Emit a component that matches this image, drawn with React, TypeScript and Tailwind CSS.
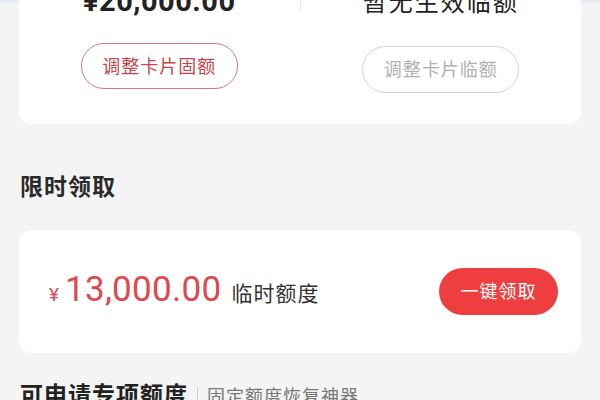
export default function App() {
  return (
    <div
      className="w-[600px] h-[400px] overflow-hidden flex flex-col bg-[linear-gradient(to_bottom,#dfe6ef_0px,#f4f4f4_4px)]"
      style={{ fontFamily: "Roboto, 'Noto Sans CJK SC', sans-serif" }}
    >
      {/* quota card, top cut off */}
      <div className="mx-[19px] h-[124px] shrink-0 bg-white rounded-b-[12px] flex overflow-hidden">
        <div className="flex-1 flex flex-col items-center">
          <div className="-mt-[15px] h-[32px] leading-[32px] text-[29px] font-bold text-[#222] tracking-[0.5px]">
            ¥20,000.00
          </div>
          <button className="mt-[26px] w-[157px] h-[46px] rounded-full border border-[#d27a7e] text-[18px] text-[#c9454c] tracking-[1px]">
            调整卡片固额
          </button>
        </div>
        <div className="w-px h-[13px] bg-[#e8e8e8]" />
        <div className="flex-1 flex flex-col items-center">
          <div className="-mt-[13px] h-[32px] leading-[32px] text-[24px] text-[#222] tracking-[2px]">
            暂无生效临额
          </div>
          <button className="mt-[27px] w-[157px] h-[47px] rounded-full border border-[#d2d2d2] text-[18px] text-[#b0b0b0] tracking-[1px]">
            调整卡片临额
          </button>
        </div>
      </div>

      <div className="mt-[49px] mx-[20px] h-[30px] leading-[30px] text-[23px] font-bold text-[#2a2a2a] tracking-[1px]">
        限时领取
      </div>

      <div className="mt-[27px] mx-[19px] h-[123px] shrink-0 bg-white rounded-[12px] flex items-center pl-[30px] pr-[23px]">
        <div className="flex-1 flex items-baseline">
          <span className="text-[19px] text-[#e0474e] mr-[6px]">¥</span>
          <span className="text-[35px] text-[#e0474e] leading-none tracking-[0.3px]">13,000.00</span>
          <span className="ml-[10px] text-[21px] text-[#333] tracking-[1px]">临时额度</span>
        </div>
        <button className="w-[119px] h-[47px] rounded-full bg-[#ef3e40] text-white text-[18px] tracking-[1px]">
          一键领取
        </button>
      </div>

      <div className="mt-[27px] mx-[20px] flex items-center h-[32px] shrink-0">
        <span className="text-[23px] font-bold text-[#222] tracking-[1px]">可申请专项额度</span>
        <span className="mx-[9px] w-px h-[18px] bg-[#cfcfcf]" />
        <span className="text-[18px] text-[#777] tracking-[1px]">固定额度恢复神器</span>
      </div>
    </div>
  );
}
